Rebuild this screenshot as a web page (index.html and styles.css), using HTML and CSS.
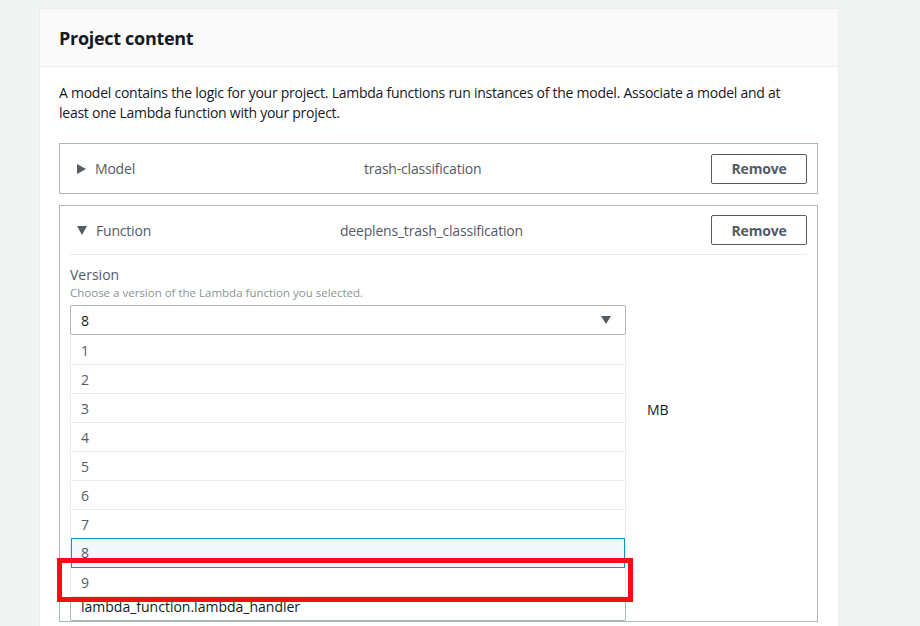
FILE: index.html
```html
<!DOCTYPE html>
<html>
<head>
<meta charset="utf-8">
<link rel="stylesheet" href="styles.css">
</head>
<body>
<div class="page">
  <section class="card">
    <header class="card-header">Project content</header>
    <div class="card-body">
      <p class="desc">A model contains the logic for your project. Lambda functions run instances of the model. Associate a model and at least one Lambda function with your project.</p>

      <div class="item">
        <div class="item-head">
          <div class="item-label"><span class="tri tri-right"></span>Model</div>
          <div class="item-name">trash-classification</div>
          <button class="btn">Remove</button>
        </div>
      </div>

      <div class="item item-open">
        <div class="item-head">
          <div class="item-label"><span class="tri tri-down"></span>Function</div>
          <div class="item-name name-fn">deeplens_trash_classification</div>
          <button class="btn">Remove</button>
        </div>
        <div class="item-body">
          <div class="field">
            <div class="label">Version</div>
            <div class="hint">Choose a version of the Lambda function you selected.</div>
            <div class="select-wrap">
              <div class="select"><span>8</span><span class="caret"></span></div>
              <ul class="menu">
                <li>1</li>
                <li>2</li>
                <li>3</li>
                <li>4</li>
                <li>5</li>
                <li>6</li>
                <li>7</li>
                <li class="active">8</li>
                <li>9</li>
              </ul>
            </div>
          </div>
          <div class="field field-mem">
            <div class="row">
              <div class="input"></div>
              <span class="unit">MB</span>
            </div>
          </div>
          <div class="field field-handler">
            <div class="input">lambda_function.lambda_handler</div>
          </div>
        </div>
      </div>
    </div>
  </section>
  <div class="annot"></div>
</div>
</body>
</html>
```

FILE: styles.css
```css
* { box-sizing: border-box; }
html, body {
  margin: 0;
  padding: 0;
  background: #f2f3f3;
  font-family: "Open Sans", "Liberation Sans", sans-serif;
  color: #16191f;
  font-size: 14px;
  overflow: hidden;
  height: 626px;
}
.page {
  position: relative;
  padding: 8px 0 0 39px;
}
.card {
  width: 800px;
  background: #fff;
  border: 1px solid #eaeded;
  border-bottom: none;
  height: 700px;
}
.card-header {
  height: 58px;
  background: #fafafa;
  border-bottom: 1px solid #eaeded;
  padding: 0 19px;
  display: flex;
  align-items: center;
  font-size: 18px;
  font-weight: 700;
  letter-spacing: -0.3px;
}
.card-body {
  padding: 16px 20px 0 19px;
}
.desc {
  margin: 0 0 20px 0;
  line-height: 20px;
  font-size: 14px;
  letter-spacing: -0.25px;
  padding-right: 10px;
}
.item {
  border: 1px solid #aab7b8;
  margin-bottom: 11px;
}
.item-head {
  height: 49px;
  display: grid;
  grid-template-columns: 263px 1fr 96px;
  align-items: center;
  padding: 0 10px 0 17px;
}
.item-label {
  display: flex;
  align-items: center;
  color: #545b64;
  letter-spacing: -0.2px;
}
.item-name {
  color: #545b64;
  padding-left: 24px;
  letter-spacing: -0.2px;
}
.name-fn { padding-left: 0; }
.tri {
  display: inline-block;
  width: 0;
  height: 0;
  margin-right: 9px;
}
.tri-right {
  border-top: 5px solid transparent;
  border-bottom: 5px solid transparent;
  border-left: 9px solid #545b64;
}
.tri-down {
  border-left: 5px solid transparent;
  border-right: 5px solid transparent;
  border-top: 9px solid #545b64;
}
.btn {
  width: 96px;
  height: 30px;
  background: #fff;
  border: 1px solid #545b64;
  border-radius: 2px;
  font-family: inherit;
  font-size: 14px;
  font-weight: 700;
  color: #545b64;
  letter-spacing: -0.2px;
  padding: 0;
}
.item-open .item-head {
  margin: 0 10px;
  padding: 0 0 0 7px;
  border-bottom: 1px solid #eaeded;
}
.item-body {
  padding: 10px 10px 0 10px;
}
.label {
  line-height: 20px;
  color: #545b64;
}
.hint {
  font-size: 11.5px;
  line-height: 16px;
  color: #879596;
  margin-bottom: 4px;
}
.select-wrap {
  position: relative;
  width: 556px;
}
.select {
  height: 30px;
  border: 1px solid #aab7b8;
  border-radius: 2px;
  padding: 0 14px 0 10px;
  display: flex;
  align-items: center;
  justify-content: space-between;
}
.caret {
  width: 0;
  height: 0;
  border-left: 5.5px solid transparent;
  border-right: 5.5px solid transparent;
  border-top: 8px solid #545b64;
}
.menu {
  position: absolute;
  top: 31px;
  left: 0;
  width: 556px;
  margin: 0;
  padding: 0;
  list-style: none;
  background: #fff;
  border-right: 1px solid #eaeded;
  border-left: 1px solid #eaeded;
  z-index: 2;
}
.menu li {
  height: 29px;
  line-height: 29px;
  padding-left: 10px;
  border-bottom: 1px solid #eaeded;
  color: #545b64;
}
.menu li.active {
  background: #f1f8fd;
  border: 1px solid #0f97c7;
  padding-left: 9px;
  line-height: 28px;
  height: 30px;
  margin-top: -1px;
}
.field-mem {
  margin-top: 59px;
}
.row {
  display: flex;
  align-items: center;
}
.row .input {
  width: 556px;
}
.unit {
  margin-left: 21px;
  color: #16191f;
}
.input {
  height: 30px;
  width: 556px;
  border: 1px solid #aab7b8;
  border-radius: 2px;
  padding: 0 10px;
  display: flex;
  align-items: center;
}
.field-handler {
  margin-top: 167px;
}
.field-handler .input {
  color: #16191f;
}
.annot {
  position: absolute;
  left: 57px;
  top: 558px;
  width: 576px;
  height: 44px;
  border: 5px solid #ff0a14;
  z-index: 5;
}
```
